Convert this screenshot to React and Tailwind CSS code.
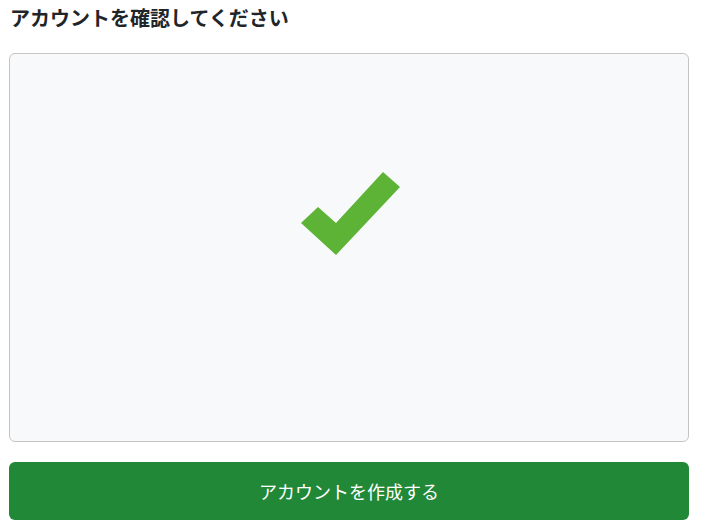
import React from 'react';

const CheckMark = () => (
  <svg width="101" height="86" viewBox="300 171 101 86" className="block">
    <polygon
      points="301,223 318,207 336,223 383,172 400,187 336,255"
      fill="#5cb335"
    />
  </svg>
);

const App = () => {
  return (
    <div
      className="w-[702px] h-[531px] bg-white pl-[9px] pt-[4px]"
      style={{ fontFamily: '"Noto Sans CJK JP", "Noto Sans", sans-serif' }}
    >
      <h1 className="text-[20px] leading-[28px] font-bold text-[#212529] pl-px">
        アカウントを確認してください
      </h1>

      <div className="mt-[21px] w-[680px] h-[389px] rounded-[6px] border border-[#c4c4c4] bg-[#f8f9fa] pl-[290px] pt-[117px]">
        <CheckMark />
      </div>

      <button className="mt-[20px] w-[680px] h-[58px] rounded-[6px] bg-[#218838] text-white text-[18px] flex items-center justify-center">
        アカウントを作成する
      </button>
    </div>
  );
};

export default App;
